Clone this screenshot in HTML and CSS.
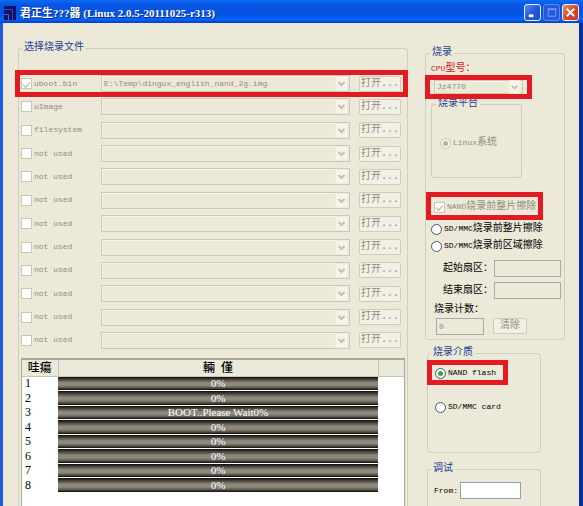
FILE: index.html
```html
<!DOCTYPE html>
<html lang="zh-CN">
<head>
<meta charset="utf-8">
<title>君正生???器 (Linux 2.0.5-20111025-r313)</title>
<link rel="stylesheet" href="styles.css">
</head>
<body>
<svg class="defs" aria-hidden="true">
  <symbol id="chev" viewBox="0 0 13 15"><rect x=".5" y=".5" width="12" height="14" rx="1" fill="#f5f3ea" stroke="#eeeadd"/><path d="M3.5 6l3 3 3-3" fill="none" stroke="#c3c1b0" stroke-width="2"/></symbol>
</svg>
<header class="titlebar">
  <svg class="logo" viewBox="0 0 12 14" aria-hidden="true"><rect width="12" height="14" fill="#10126c"/><path d="M0 3.500h8.500V14" fill="none" stroke="#2f45b8"/><path d="M0 8.500h4.500V14" fill="none" stroke="#4a64d4"/></svg>
  <h1>君正生???器 (Linux 2.0.5-20111025-r313)</h1>
  <button class="win" aria-label="Minimize"><svg viewBox="0 0 16 16"><path d="M4 11.5h5" stroke="#fff" stroke-width="3"/></svg></button>
  <button class="win dim" aria-label="Maximize" disabled><svg viewBox="0 0 16 16"><path d="M4 4.5h9" stroke="#7c9bf0" stroke-width="2"/><path d="M4.500 4v8h8V4" fill="none" stroke="#7c9bf0"/></svg></button>
  <button class="win close" aria-label="Close"><svg viewBox="0 0 16 16"><path d="M4 4l8 8M12 4l-8 8" stroke="#fff" stroke-width="2"/></svg></button>
</header>
<main>
  <fieldset class="files">
    <legend>选择烧录文件</legend>
    <div class="rows">
      <div class="row marked"><label class="en off"><input type="checkbox" checked disabled>uboot.bin</label><span class="combo"><select class="en" aria-label="uboot.bin" disabled><option>E:\Temp\dingux_english_nand_2g.img</option></select><svg><use href="#chev"/></svg></span><button disabled>打开...</button></div>
      <div class="row"><label class="en off"><input type="checkbox" disabled>uImage</label><span class="combo"><select aria-label="uImage" disabled></select><svg><use href="#chev"/></svg></span><button disabled>打开...</button></div>
      <div class="row"><label class="en off"><input type="checkbox" disabled>filesystem</label><span class="combo"><select aria-label="filesystem" disabled></select><svg><use href="#chev"/></svg></span><button disabled>打开...</button></div>
      <div class="row"><label class="en off"><input type="checkbox" disabled>not used</label><span class="combo"><select aria-label="not used" disabled></select><svg><use href="#chev"/></svg></span><button disabled>打开...</button></div>
      <div class="row"><label class="en off"><input type="checkbox" disabled>not used</label><span class="combo"><select aria-label="not used" disabled></select><svg><use href="#chev"/></svg></span><button disabled>打开...</button></div>
      <div class="row"><label class="en off"><input type="checkbox" disabled>not used</label><span class="combo"><select aria-label="not used" disabled></select><svg><use href="#chev"/></svg></span><button disabled>打开...</button></div>
      <div class="row"><label class="en off"><input type="checkbox" disabled>not used</label><span class="combo"><select aria-label="not used" disabled></select><svg><use href="#chev"/></svg></span><button disabled>打开...</button></div>
      <div class="row"><label class="en off"><input type="checkbox" disabled>not used</label><span class="combo"><select aria-label="not used" disabled></select><svg><use href="#chev"/></svg></span><button disabled>打开...</button></div>
      <div class="row"><label class="en off"><input type="checkbox" disabled>not used</label><span class="combo"><select aria-label="not used" disabled></select><svg><use href="#chev"/></svg></span><button disabled>打开...</button></div>
      <div class="row"><label class="en off"><input type="checkbox" disabled>not used</label><span class="combo"><select aria-label="not used" disabled></select><svg><use href="#chev"/></svg></span><button disabled>打开...</button></div>
      <div class="row"><label class="en off"><input type="checkbox" disabled>not used</label><span class="combo"><select aria-label="not used" disabled></select><svg><use href="#chev"/></svg></span><button disabled>打开...</button></div>
      <div class="row"><label class="en off"><input type="checkbox" disabled>not used</label><span class="combo"><select aria-label="not used" disabled></select><svg><use href="#chev"/></svg></span><button disabled>打开...</button></div>
    </div>
    <div class="list">
      <table>
        <thead><tr><th class="num">哇瘍</th><th>輛&ensp;僅</th><th class="rest"></th></tr></thead>
        <tbody>
          <tr><td>1</td><td class="bar">0%</td><td></td></tr>
          <tr><td>2</td><td class="bar">0%</td><td></td></tr>
          <tr><td>3</td><td class="bar">BOOT..Please Wait0%</td><td></td></tr>
          <tr><td>4</td><td class="bar">0%</td><td></td></tr>
          <tr><td>5</td><td class="bar">0%</td><td></td></tr>
          <tr><td>6</td><td class="bar">0%</td><td></td></tr>
          <tr><td>7</td><td class="bar">0%</td><td></td></tr>
          <tr><td>8</td><td class="bar">0%</td><td></td></tr>
        </tbody>
      </table>
    </div>
  </fieldset>
  <div class="side">
    <fieldset class="burn">
      <legend>烧录</legend>
      <label class="cpu" for="cpu"><span class="en">CPU</span>型号：</label>
      <div class="cpu-box marked"><span class="combo"><select id="cpu" class="en" disabled><option>Jz4770</option></select><svg><use href="#chev"/></svg></span></div>
      <fieldset class="platform">
        <legend>烧录平台</legend>
        <label class="off"><input type="radio" name="os" checked disabled><span class="en">Linux</span>系统</label>
      </fieldset>
      <div class="nand marked"><label class="off"><input type="checkbox" checked disabled><span class="en">NAND</span>烧录前整片擦除</label></div>
      <div class="sd">
        <label><input type="radio" name="erase"><span class="en">SD/MMC</span>烧录前整片擦除</label>
        <label><input type="radio" name="erase"><span class="en">SD/MMC</span>烧录前区域擦除</label>
      </div>
      <div class="sectors">
        <label for="s1">起始扇区：</label><input id="s1" type="text" disabled>
        <label for="s2">结束扇区：</label><input id="s2" type="text" disabled>
      </div>
      <label class="count-label" for="count">烧录计数：</label>
      <div class="count"><input id="count" class="en" type="text" value="0" disabled><button disabled>清除</button></div>
    </fieldset>
    <fieldset class="medium">
      <legend>烧录介质</legend>
      <div class="flash marked"><label class="en"><input type="radio" name="medium" checked>NAND flash</label></div>
      <label class="en"><input type="radio" name="medium">SD/MMC card</label>
    </fieldset>
    <fieldset class="debug">
      <legend>调试</legend>
      <div class="from"><label class="en" for="from">From:</label><input id="from" type="text"></div>
    </fieldset>
  </div>
</main>
</body>
</html>
```
FILE: styles.css
```css
* { box-sizing: border-box; }
body {
  margin: 0;
  height: 100vh;
  overflow: hidden;
  display: flex;
  flex-direction: column;
  background: #ece9d8;
  color: #000;
  font: 10px/12px "Liberation Mono", "Noto Sans CJK SC", monospace;
}
.defs { display: none; }
input, button, select { font: inherit; margin: 0; border-radius: 0; }
.en { font-family: "Liberation Mono", monospace; font-size: 8px; }

.titlebar {
  flex: none;
  display: flex;
  align-items: center;
  height: 23px;
  padding: 2px 4px 0;
  background: linear-gradient(#0a6cf2, #0a56e4 20%, #0553e0 60%, #0563f8 85%, #0340c0);
}
.logo { width: 12px; height: 14px; margin-right: 4px; }
.titlebar h1 {
  flex: 1;
  margin: 0;
  color: #fff;
  font: bold 11px/14px "Liberation Serif", "Noto Sans CJK SC", serif;
  text-shadow: 1px 1px 0 #0a2a80;
}
.win {
  width: 17px;
  height: 17px;
  margin-left: 2px;
  padding: 0;
  border: 1px solid #e8eefc;
  border-radius: 3px;
  background: linear-gradient(135deg, #5c8cf4, #2356dc 50%, #1c4cd0);
}
.win svg { display: block; }
.win.dim { border-color: #5f87ec; background: #2359dc; }
.win.close { background: linear-gradient(135deg, #ee9070, #d9482a 50%, #c23b15); }

main {
  flex: 1;
  min-height: 0;
  display: flex;
  gap: 17px;
  padding: 19px 14px 0 15px;
  border-left: 3px solid #1a5be6;
  border-right: 4px solid #0b2ea2;
}
fieldset {
  min-width: 0;
  margin: 0;
  border: 1px solid #d0cebc;
  border-radius: 3px;
}
legend { height: 12px; padding: 0 2px; color: #1c3c90; }
.off, :disabled { color: #8f8d7c; }
label { display: flex; align-items: center; white-space: nowrap; }
.marked { position: relative; }
.marked::before {
  content: "";
  position: absolute;
  inset: 0;
  border: 5px solid #e21b23;
  pointer-events: none;
}

input[type="checkbox"], input[type="radio"] {
  appearance: none;
  flex: none;
  display: grid;
  place-items: center;
  width: 11px;
  height: 11px;
  margin-right: 2px;
  border: 1px solid #c9c6b6;
  background: #fff;
}
input[type="radio"] { border-color: #42586f; border-radius: 50%; }
input[type="radio"]:disabled { border-color: #c9c6b6; background: #f3f1e6; }
input[type="radio"]:checked::before { content: ""; width: 5px; height: 5px; border-radius: 50%; background: #36a536; }
input[type="radio"]:checked:disabled::before { background: #b5b3a2; }
input[type="checkbox"]:checked::before {
  content: "";
  width: 6px;
  height: 3px;
  border: solid #b5a8a8;
  border-width: 0 0 1px 1px;
  transform: rotate(-45deg);
}
input[type="text"] {
  min-width: 0;
  height: 17px;
  padding: 0 2px;
  border: 1px solid #8fa3a8;
  background: #fff;
}
input[type="text"]:disabled { border-color: #a3aca5; background: #ece9d8; }
button:disabled:not(.win) {
  height: 16px;
  padding: 0;
  border: 1px solid #cfccba;
  border-radius: 2px;
  background: #f2f0e4;
}
.combo { position: relative; display: block; height: 17px; }
.combo select {
  appearance: none;
  display: block;
  width: 100%;
  height: 100%;
  padding: 0 2px;
  border: 1px solid #cbc8b5;
  background: #ece9d8;
  box-shadow: inset 1px 1px 0 #f6f4ea;
  opacity: 1;
}
.combo svg { position: absolute; top: 1px; right: 2px; width: 13px; height: 15px; }

.files {
  flex: 1;
  display: flex;
  flex-direction: column;
  padding: 21px 2px 0;
  border-bottom: 0;
  border-radius: 3px 3px 0 0;
}
.files > legend { margin-left: 1px; }
.rows { display: flex; flex-direction: column; justify-content: space-between; height: 274px; }
.row {
  display: grid;
  grid-template-columns: 80px 1fr 42px;
  align-items: center;
  height: 17px;
  padding: 0 4px 0 0;
}
.row .combo { margin-right: 9px; }
.row.marked::before { inset: -5px -3px -5px -6px; }
.list {
  flex: 1;
  min-height: 0;
  margin-top: 9px;
  border: 1px solid #aaa998;
  border-width: 2px 1px 0;
  background: #fff;
}
table { width: 100%; border-collapse: collapse; table-layout: fixed; font: 12px/12px "Liberation Serif", "Noto Sans CJK TC", serif; }
th { height: 16px; padding: 0; background: #ebe9da; border-right: 1px solid #c9c6b3; border-bottom: 1px solid #c9c6b3; font: 500 12px/14px "Liberation Serif", "Noto Sans CJK TC", serif; }
.num { width: 36px; }
.rest { width: 26px; border-right: 0; }
td { height: 14px; padding: 0 3px; }
tbody tr:nth-child(even) td { height: 15px; }
td.bar {
  padding: 0;
  border-bottom: 1px solid #fff;
  background: linear-gradient(#0c0b0a, #4a473f 20%, #8f897c 45%, #8f897c 65%, #57534a 84%, #0c0b0a);
  background-clip: padding-box;
  color: #fff;
  font-size: 11px;
  text-align: center;
}

.side { flex: none; width: 140px; margin-top: 5px; }
.burn { padding: 4px 3px 4px 5px; }
.burn > legend { margin-left: -1px; }
.cpu { color: #d01818; }
.cpu-box { width: 107px; margin: 0 0 0 -6px; padding: 5px 9px; height: 24px; }
.cpu-box .combo { height: 14px; }
.cpu-box .combo svg { top: 0; height: 14px; }
.platform { width: 91px; height: 80px; margin-top: -1px; padding: 27px 8px; }
.platform legend { margin-left: -4px; }
.nand { width: 117px; height: 28px; margin: 14px 0 0 -5px; padding: 9px 8px; }
.sd { display: grid; gap: 5px; margin-top: 3px; }
.sectors { display: grid; grid-template-columns: 51px 1fr; gap: 5px 0; align-items: center; margin: 8px 0 0 12px; }
.count-label { margin: 5px 0 0 3px; }
.count { display: flex; gap: 9px; margin: 2px 0 0 5px; }
.count input { width: 48px; }
.count button { width: 34px; }
.medium, .debug { width: 114px; margin-left: 2px; }
.medium { height: 106px; margin-top: 7px; padding: 0; }
.medium legend, .debug legend { margin-left: 3px; }
.medium > label { margin: 16px 0 0 7px; }
.flash { width: 81px; height: 25px; margin: 1px 0 0 -1px; padding: 7px 8px; }
.debug { height: 60px; margin-top: 10px; padding: 7px 0 0 6px; border-bottom: 0; }
.debug legend { margin-left: -3px; }
.from { display: flex; gap: 2px; }
.from input { width: 61px; }
```
